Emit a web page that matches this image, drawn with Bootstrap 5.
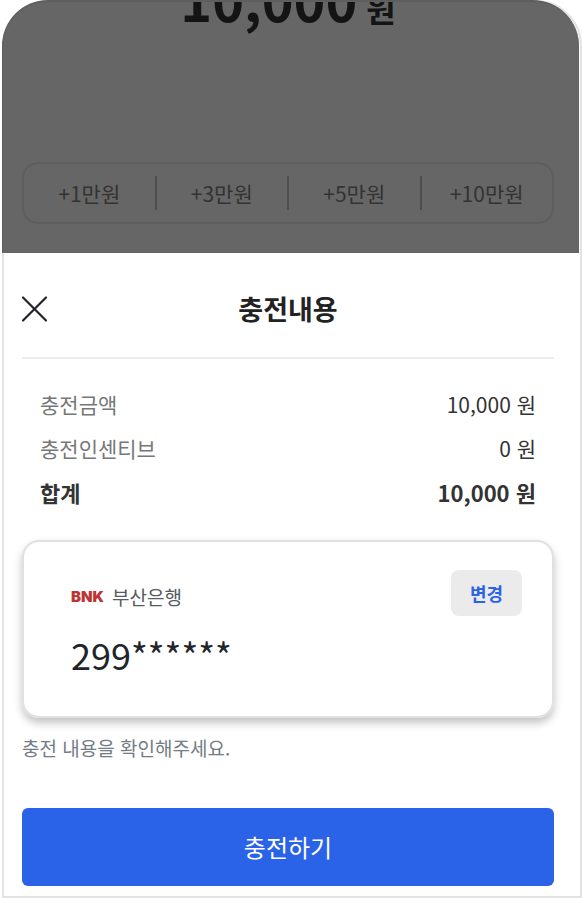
<!DOCTYPE html>
<html lang="ko">
<head>
<meta charset="utf-8">
<meta name="viewport" content="width=device-width, initial-scale=1">
<title>충전내용</title>
<link href="https://cdn.jsdelivr.net/npm/bootstrap@5.3.0/dist/css/bootstrap.min.css" rel="stylesheet">
<style>
  body { font-family: "Noto Sans CJK KR", "Noto Sans", sans-serif; color: #333; background: #fff; padding-left: 2px; }
  .phone { border: 2px solid #e3e3e3; border-radius: 46px 46px 0 0; min-height: 100vh; }
  /* dimmed page behind the sheet */
  .backdrop-page { background: #666; border: 2px solid #5e5e5e; border-width: 2px 0 0 1px; border-radius: 46px 46px 0 0; margin: -2px 1px 0 -2px; padding: 0 25px 29px 19px; }
  .amount { font-size: 54px; line-height: 80px; margin: -43px 0 0; color: #141414; }
  .amount small { font-size: 32px; font-weight: 700; white-space: pre; }
  .quick { border: 2px solid #5e5e5e; border-radius: 16px; padding: 12px 0; margin-top: 114px; }
  .quick .btn { font-size: 21px; line-height: 34px; color: #333; border: 0; border-radius: 0; padding: 0; }
  .quick .btn + .btn { border-left: 2px solid #4e4e4e; }
  .sheet { padding: 0 26px 10px 18px; }
  .sheet-head { height: 106px; border-bottom: 2px solid #ededed; padding-top: 8px; }
  .sheet-head h2 { font-size: 27px; line-height: 40px; color: #222; }
  .close-btn { line-height: 0; }
  .sums { padding: 23px 18px 0; font-size: 21px; line-height: 44px; }
  .sums dt { color: #777; font-weight: 400; }
  .sums .total dt, .sums .total dd { color: #333; font-weight: 700; font-size: 22px; }
  .account { border: 2px solid #e0e0e0; border-radius: 17px; box-shadow: 0 5px 9px rgba(0,0,0,.24); padding: 28px 30px 34px 47px; margin-top: 26px; }
  .bank-logo { font-family: Inter, sans-serif; font-weight: 900; font-size: 15px; color: #bd3434; }
  .bank-name { font-size: 19px; color: #555b61; }
  .number { font-size: 36px; line-height: 56px; color: #212529; margin-top: 10px; }
  .change-btn { background: #ebebeb; color: #2b63e8; font-size: 18px; font-weight: 700; line-height: 26px; border: 0; border-radius: 8px; padding: 10px 19px; }
  .hint { font-size: 19px; line-height: 28px; color: #737b84; margin: 16px 0 46px; }
  .charge-btn { background: #2a63e8; color: #fff; font-size: 24px; line-height: 36px; padding: 21px; border: 0; border-radius: 6px; }
</style>
<script src="https://cdn.jsdelivr.net/npm/bootstrap@5.3.0/dist/js/bootstrap.bundle.min.js"></script>
</head>
<body>
<main class="phone d-flex flex-column">
  <section class="backdrop-page overflow-hidden">
    <p class="amount text-center fw-bold">10,000<small> 원</small></p>
    <div class="quick d-flex">
      <button type="button" class="btn col">+1만원</button>
      <button type="button" class="btn col">+3만원</button>
      <button type="button" class="btn col">+5만원</button>
      <button type="button" class="btn col">+10만원</button>
    </div>
  </section>

  <section class="sheet">
    <header class="sheet-head d-flex align-items-center">
      <button type="button" class="close-btn btn p-0 border-0" aria-label="닫기">
        <svg width="24" height="26" viewBox="0 0 24 26" fill="none" stroke="#23232b" stroke-width="2.2" stroke-linecap="round" overflow="visible"><path d="M1 1.5 24 24.5M24 1.5 1 24.5"/></svg>
      </button>
      <h2 class="flex-grow-1 text-center fw-bold m-0 pe-4">충전내용</h2>
    </header>

    <dl class="sums m-0">
      <div class="d-flex justify-content-between"><dt>충전금액</dt><dd class="m-0">10,000 원</dd></div>
      <div class="d-flex justify-content-between"><dt>충전인센티브</dt><dd class="m-0">0 원</dd></div>
      <div class="total d-flex justify-content-between"><dt>합계</dt><dd class="m-0">10,000 원</dd></div>
    </dl>

    <div class="account">
      <div class="d-flex align-items-center justify-content-between">
        <div class="d-flex align-items-center gap-2 pt-2">
          <span class="bank-logo">BNK</span>
          <span class="bank-name">부산은행</span>
        </div>
        <button type="button" class="change-btn btn">변경</button>
      </div>
      <div class="number">299******</div>
    </div>

    <p class="hint">충전 내용을 확인해주세요.</p>
    <button type="button" class="charge-btn btn w-100">충전하기</button>
  </section>
</main>
</body>
</html>
